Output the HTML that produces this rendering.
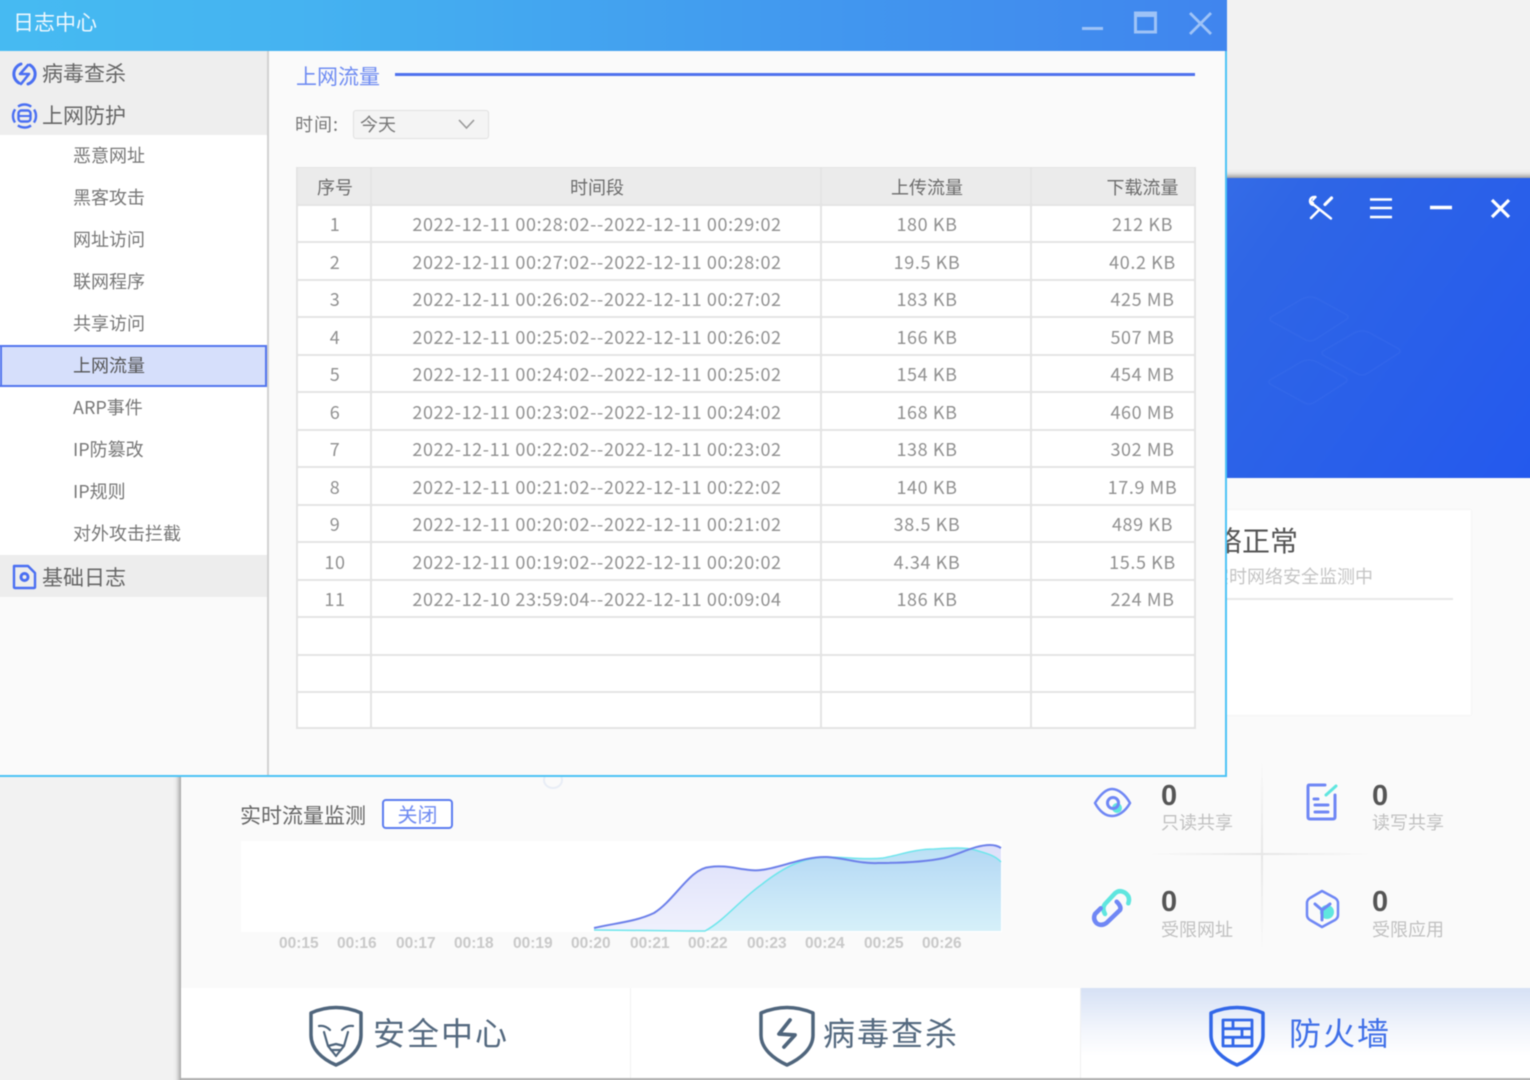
<!DOCTYPE html>
<html lang="zh"><head><meta charset="utf-8"><title>日志中心</title>
<style>
*{box-sizing:border-box;margin:0;padding:0}
html,body{width:1530px;height:1080px;overflow:hidden;background:#f2f2f2}
body{font-family:"Liberation Sans","Noto Sans CJK SC",sans-serif;position:relative}
.a{position:absolute;white-space:nowrap}
#root{position:absolute;left:-10px;top:-10px;width:1550px;height:1100px;filter:blur(.4px);background:#f2f2f2}
#in{position:absolute;left:10px;top:10px;width:1530px;height:1080px}
.sub{left:73px;font-size:18px;line-height:26px;color:#777;font-family:"Noto Sans CJK SC",sans-serif}
.grp{left:42px;font-size:21px;line-height:30px;color:#666;font-family:"Noto Sans CJK SC",sans-serif}
.grid{position:absolute;left:296px;top:167px;width:900px;display:grid;grid-template-columns:74px 450px 210px 164px;grid-template-rows:repeat(14,37.5px) 35.5px;border-left:2px solid #e4e4e4;border-top:1px solid #e4e4e4;font-family:"Noto Sans CJK SC",sans-serif;font-size:18px;color:#909090;background:#fff}
.grid div{border-right:2px solid #e4e4e4;border-bottom:2px solid #e4e4e4;display:flex;align-items:center;justify-content:center;white-space:nowrap;height:100%;letter-spacing:.6px;padding-top:2px;padding-left:2px}
.grid div:nth-child(4n){justify-content:flex-start;padding-left:0}
.grid div:nth-child(4n) span{display:block;width:100%;text-align:center;margin-left:59px}
.grid .h{background:#ebebeb;color:#6c6c6c;letter-spacing:0}
.num{font-size:29px;font-weight:bold;color:#555;line-height:30px;font-family:"Liberation Sans",sans-serif}
.lab{font-size:18px;color:#c0c0c0;line-height:26px;font-family:"Noto Sans CJK SC",sans-serif}
.tl{font-size:32px;letter-spacing:2px;line-height:44px;color:#54697f;font-family:"Noto Sans CJK SC",sans-serif}
.tk{font-size:15.5px;font-weight:bold;color:#c9c9c9;line-height:20px;font-family:"Liberation Sans",sans-serif}
</style></head><body>
<div id="root"><div id="in">

<!-- back window -->
<div class="a" style="left:181px;top:178px;width:1360px;height:910px;background:#fafafa;box-shadow:0 -2px 6px rgba(0,0,0,.35),-2px 0 5px rgba(0,0,0,.22)"></div>
<div class="a" style="left:181px;top:178px;width:1360px;height:300px;background:linear-gradient(125deg,#4a84ec 45%,#2f66e6 72%,#2459ee 100%)"></div>
<svg class="a" style="left:1227px;top:181px" width="303" height="297" fill="none" stroke="#5a86ee" stroke-opacity=".14" stroke-width="1.500">
<path d="M44 136 L75 118 Q83 114 91 118 L120 134 Q122 136 120 138 L89 158 Q83 162 77 158 L44 140 Q42 138 44 136Z"/>
<path d="M96 170 L127 152 Q135 148 143 152 L172 168 Q174 170 172 172 L141 192 Q135 196 129 192 L96 174 Q94 172 96 170Z"/>
<path d="M43 199 L74 181 Q82 177 90 181 L119 197 Q121 199 119 201 L88 221 Q82 225 76 221 L43 203 Q41 201 43 199Z"/>
</svg>

<svg class="a" style="left:1300px;top:190px" width="220" height="38" fill="none" stroke="#fff" stroke-width="3" stroke-linecap="round">
<path d="M15.500 7 Q10 6.500 10 11.500 Q10.500 15 14 15 L31 28.500 M10.500 11 L13 13" stroke-width="2.400"/>
<path d="M15.500 7 L13 10" stroke-width="2"/>
<path d="M31.500 8 L25 14.500" stroke-width="3.200"/>
<path d="M19 20 L11 28" stroke-width="2.600"/>
<path d="M70 9.500H92 M70 18H92 M70 27H92" stroke-width="2.500" stroke-linecap="butt"/>
<path d="M130 17.500H152" stroke-width="3.500" stroke-linecap="butt"/>
<path d="M192 10 L209 27 M209 10 L192 27" stroke-width="3.200" stroke-linecap="butt"/>
</svg>

<!-- status card -->
<div class="a" style="left:1100px;top:510px;width:371px;height:205px;background:#fff;box-shadow:0 0 2px rgba(0,0,0,.08)"></div>
<div class="a" style="left:1214px;top:520px;font-size:28px;line-height:40px;color:#555;font-family:'Noto Sans CJK SC',sans-serif">络正常</div>
<div class="a" style="left:1211px;top:563px;font-size:18px;line-height:26px;color:#c4c4c4;font-family:'Noto Sans CJK SC',sans-serif">实时网络安全监测中</div>
<div class="a" style="left:1100px;top:598px;width:353px;height:1.500px;background:#e8e8e8"></div>

<div class="a" style="left:543px;top:771px;width:20px;height:18px;border-radius:50%;border:2px solid #e8edf6"></div>

<!-- chart -->
<div class="a" style="left:240px;top:800px;font-size:21px;line-height:30px;color:#666;font-family:'Noto Sans CJK SC',sans-serif">实时流量监测</div>
<div class="a" style="left:382px;top:799px;width:71px;height:30px;border:2px solid #5b7cf0;border-radius:4px;background:#fff;color:#6f8bf2;font-size:20px;line-height:26px;text-align:center;font-family:'Noto Sans CJK SC',sans-serif">关闭</div>
<svg class="a" style="left:241px;top:841px" width="761" height="91" viewBox="241 841 761 91">
<defs>
<linearGradient id="g1" x1="0" y1="0" x2="0" y2="1"><stop offset="0" stop-color="#dde0fa"/><stop offset="1" stop-color="#f0f1fd"/></linearGradient>
<linearGradient id="g2" x1="0" y1="0" x2="0" y2="1"><stop offset="0" stop-color="#a5d5f2" stop-opacity=".75"/><stop offset="1" stop-color="#c8f0f8" stop-opacity=".65"/></linearGradient>
</defs>
<rect x="241" y="841" width="761" height="91" fill="#fff"/>
<path d="M594 928 C615 923,635 922,654 913 C675 900,690 868,710 867 C728 864,745 872,761 870 C780 868,805 856,827 857 C845 858,860 864,878 863 C900 863,925 862,944 858 C960 854,975 845,990 845 C995 845,998 846,1001 848 L1001 931 L594 931Z" fill="url(#g1)"/>
<path d="M705 931 C725 920,740 900,761 885 C785 866,805 857,827 857 C845 857,865 860,883 858 C900 855,915 849,934 849 C950 848,965 847,975 850 C985 853,995 855,1001 862 L1001 931Z" fill="url(#g2)"/>
<path d="M594 930 L690 931 L705 931 C725 920,740 900,761 885 C785 866,805 857,827 857 C845 857,865 860,883 858 C900 855,915 849,934 849 C950 848,965 847,975 850 C985 853,995 855,1001 862" fill="none" stroke="#6fe6ec" stroke-width="1.500"/>
<path d="M594 928 C615 923,635 922,654 913 C675 900,690 868,710 867 C728 864,745 872,761 870 C780 868,805 856,827 857 C845 858,860 864,878 863 C900 863,925 862,944 858 C960 854,975 845,990 845 C995 845,998 846,1001 848" fill="none" stroke="#6d80ea" stroke-width="2"/>
</svg>
<span class="a tk" style="left:279px;top:934px">00:15</span>
<span class="a tk" style="left:337px;top:934px">00:16</span>
<span class="a tk" style="left:396px;top:934px">00:17</span>
<span class="a tk" style="left:454px;top:934px">00:18</span>
<span class="a tk" style="left:513px;top:934px">00:19</span>
<span class="a tk" style="left:571px;top:934px">00:20</span>
<span class="a tk" style="left:630px;top:934px">00:21</span>
<span class="a tk" style="left:688px;top:934px">00:22</span>
<span class="a tk" style="left:747px;top:934px">00:23</span>
<span class="a tk" style="left:805px;top:934px">00:24</span>
<span class="a tk" style="left:864px;top:934px">00:25</span>
<span class="a tk" style="left:922px;top:934px">00:26</span>

<!-- stats -->
<div class="a" style="left:1261px;top:760px;width:1.500px;height:190px;background:linear-gradient(#fafafa,#e6e6e6 50%,#fafafa)"></div>
<div class="a" style="left:1150px;top:853px;width:220px;height:1.500px;background:linear-gradient(90deg,#fafafa,#e6e6e6 50%,#fafafa)"></div>
<span class="a num" style="left:1161px;top:781px">0</span><span class="a lab" style="left:1161px;top:809px">只读共享</span>
<span class="a num" style="left:1372px;top:781px">0</span><span class="a lab" style="left:1372px;top:809px">读写共享</span>
<span class="a num" style="left:1161px;top:887px">0</span><span class="a lab" style="left:1161px;top:916px">受限网址</span>
<span class="a num" style="left:1372px;top:887px">0</span><span class="a lab" style="left:1372px;top:916px">受限应用</span>
<svg class="a" style="left:1090px;top:780px" width="380" height="150" fill="none" stroke-linecap="round" stroke-linejoin="round">
<!-- eye -->
<path d="M5 23 C12 12,18 9,22 9 C28 9,35 14,40 23 C35 32,28 36,22 36 C16 36,10 32,5 23Z" stroke="#6f87f5" stroke-width="2.500"/>
<circle cx="27" cy="28" r="5" fill="#5fe6df"/>
<circle cx="23" cy="23" r="5.500" stroke="#6f87f5" stroke-width="3"/>
<!-- doc -->
<path d="M235 5 H219 Q218 5 218 7 V37 Q218 39 220 39 H243 Q245 39 245 37 V15" stroke="#6f87f5" stroke-width="3"/>
<path d="M246 6 L236 15" stroke="#5fe6df" stroke-width="3"/>
<path d="M224 19 H228 M225 25 H238 M225 32 H238" stroke="#6f87f5" stroke-width="3"/>
<!-- link -->
<path d="M38.300 123.300 Q40.700 116.700 35 112.700 Q29.300 109.300 25 113.300 L15 124 Q11.700 128.300 15 134" stroke="#5fe6df" stroke-width="4.500"/>
<path d="M10.700 128.300 L5 134 Q2.700 139.300 6.700 143.300 Q11.700 146.700 16.700 142.700 L30 130 Q31.700 126.700 26.700 121.700" stroke="#6f87f5" stroke-width="4.500"/>
<!-- cube -->
<path d="M232 112 L245 119 Q248 121 248 124 V136 Q248 139 245 141 L232 148 L220 141 Q217 139 217 136 V124 Q217 121 220 119Z" stroke="#6f87f5" stroke-width="2.500" transform="translate(0,-1)"/>
<circle cx="237" cy="132" r="7" fill="#5fe6df"/>
<path d="M225 124 L232 130 L240 124 M232 130 V140" stroke="#6f87f5" stroke-width="3"/>
</svg>

<!-- tabs -->
<div class="a" style="left:181px;top:988px;width:1360px;height:90px;background:#fff"></div>
<div class="a" style="left:630px;top:988px;width:1px;height:90px;background:#f2f2f2"></div>
<div class="a" style="left:1080px;top:988px;width:460px;height:90px;background:linear-gradient(#d6e1f5,#f2f5fc 45%,#fff 75%);border-left:1px solid #f0f0f0"></div>
<div class="a" style="left:181px;top:1078px;width:1360px;height:12px;background:#b5b5b5"></div>
<svg class="a" style="left:305px;top:1002px" width="62" height="68" fill="none" stroke="#4f657c" stroke-width="3.500" stroke-linejoin="round" stroke-linecap="round">
<path d="M6 11 Q18 5.500 31 5.500 Q44 5.500 56 11 V33 C56 47 45 57 31 63 C17 57 6 47 6 33Z" stroke-width="3.500"/>
<path d="M14 24 Q20 23 25 28 M48 24 Q42 23 37 28 M19 30 L23 44 L31 42 L39 44 L43 30 M23 44 L31 54 L39 44 M26 48 H36" stroke-width="2.200"/>
</svg>
<span class="a tl" style="left:373px;top:1010px">安全中心</span>
<svg class="a" style="left:755px;top:1002px" width="62" height="68" fill="none" stroke="#4f657c" stroke-width="3.500" stroke-linejoin="round" stroke-linecap="round">
<path d="M6 11 Q19 5.500 32 5.500 Q45 5.500 58 11 V33 C58 47 45 57 32 63 C19 57 6 47 6 33Z"/>
<path d="M35 18 L24 32 L40 33 L29 45" stroke-width="3.800"/>
</svg>
<span class="a tl" style="left:823px;top:1010px">病毒查杀</span>
<svg class="a" style="left:1205px;top:1002px" width="62" height="68" fill="none" stroke="#3267e8" stroke-width="3.500" stroke-linejoin="round">
<path d="M6 11 Q18 5.500 32 5.500 Q46 5.500 58 11 V33 C58 47 46 57 32 63 C18 57 6 47 6 33Z"/>
<path d="M18 18 H47 V44 H18Z M18 26.700 H47 M18 35.300 H47 M28 18 V26.700 M37 26.700 V35.300 M28 35.300 V44" stroke-width="2.800"/>
</svg>
<span class="a tl" style="left:1289px;top:1010px;color:#3f6fe8">防火墙</span>

<!-- front window -->
<div class="a" style="left:-10px;top:-10px;width:1237px;height:787px;background:#fafafa;border-right:2px solid #4cc3f5;border-bottom:2px solid #4cc3f5"></div>
<div class="a" style="left:-10px;top:-10px;width:1237px;height:61px;background:linear-gradient(90deg,#46bbf2 0%,#45b3f1 25%,#4299ef 65%,#4085ee 100%)"></div>
<div class="a" style="left:13px;top:7px;font-size:21px;line-height:30px;color:#eef8fe;font-family:'Noto Sans CJK SC',sans-serif">日志中心</div>
<svg class="a" style="left:1075px;top:5px" width="145" height="36" fill="none" stroke="#9ec3f7" stroke-width="3.500">
<path d="M7 23.500H28" stroke-width="3"/>
<rect x="60.500" y="8" width="20" height="19" stroke-width="3"/>
<path d="M60 9.500H81" stroke-width="5"/>
<path d="M115 8 L136 29 M136 8 L115 29" stroke-width="2.800"/>
</svg>

<!-- sidebar -->
<div class="a" style="left:-10px;top:51px;width:277px;height:84px;background:#eeeeee"></div>
<div class="a" style="left:-10px;top:135px;width:277px;height:420px;background:#fff"></div>
<div class="a" style="left:-10px;top:555px;width:277px;height:42px;background:#ededed"></div>
<div class="a" style="left:267px;top:51px;width:2px;height:724px;background:#d2d2d2"></div>
<div class="a" style="left:-10px;top:345px;width:277px;height:42px;background:#d6dffb;border:2px solid #5275ee;border-left:none"></div>
<div class="a" style="left:0;top:345px;width:2px;height:42px;background:#5275ee"></div>
<svg class="a" style="left:10px;top:60px" width="30" height="540" fill="none" stroke="#4a6ff2" stroke-linecap="round" stroke-linejoin="round">
<path d="M11 4 A10.500 10.500 0 0 0 9 23 M18 24 A10.500 10.500 0 0 0 20 5" stroke-width="3"/>
<path d="M18 5 L10 14 H19 L11 24" stroke-width="2.600"/>
<circle cx="14.500" cy="56" r="11.500" stroke-width="2.400" stroke-dasharray="14 4" stroke-dashoffset="7" stroke-linecap="butt"/>
<rect x="8.500" y="50.500" width="12" height="11" rx="3" stroke-width="2.400"/><path d="M8.500 56H20.500" stroke-width="2"/>
<path d="M4 506 H18 L25 513 V527 Q25 528 24 528 H5 Q4 528 4 527Z" stroke-width="2.400"/>
<circle cx="14.500" cy="517" r="3.500" stroke-width="3"/>
</svg>
<div class="a grp" style="top:58px">病毒查杀</div>
<div class="a grp" style="top:100px">上网防护</div>
<div class="a grp" style="top:562px">基础日志</div>
<div class="a sub" style="top:142px">恶意网址</div>
<div class="a sub" style="top:184px">黑客攻击</div>
<div class="a sub" style="top:226px">网址访问</div>
<div class="a sub" style="top:268px">联网程序</div>
<div class="a sub" style="top:310px">共享访问</div>
<div class="a sub" style="top:352px;color:#555">上网流量</div>
<div class="a sub" style="top:394px">ARP事件</div>
<div class="a sub" style="top:436px">IP防篡改</div>
<div class="a sub" style="top:478px">IP规则</div>
<div class="a sub" style="top:520px">对外攻击拦截</div>

<!-- content -->
<div class="a" style="left:296px;top:61px;font-size:21px;line-height:30px;color:#6f8cf2;font-family:'Noto Sans CJK SC',sans-serif">上网流量</div>
<div class="a" style="left:395px;top:73px;width:800px;height:3px;background:#4f71ee"></div>
<div class="a" style="left:295px;top:111px;font-size:18px;line-height:26px;color:#777;letter-spacing:1px;font-family:'Noto Sans CJK SC',sans-serif">时间:</div>
<div class="a" style="left:353px;top:110px;width:136px;height:29px;background:#f4f4f4;border:1.500px solid #e0e0e0;border-radius:3px"></div>
<div class="a" style="left:360px;top:111px;font-size:18px;line-height:26px;color:#777;font-family:'Noto Sans CJK SC',sans-serif">今天</div>
<svg class="a" style="left:456px;top:117px" width="22" height="16" fill="none" stroke="#999" stroke-width="1.600"><path d="M3 3 L10.500 11 L18 3"/></svg>

<div class="grid">
<div class="h">序号</div><div class="h">时间段</div><div class="h">上传流量</div><div class="h"><span>下载流量</span></div>
<div>1</div><div>2022-12-11 00:28:02--2022-12-11 00:29:02</div><div>180 KB</div><div><span>212 KB</span></div>
<div>2</div><div>2022-12-11 00:27:02--2022-12-11 00:28:02</div><div>19.5 KB</div><div><span>40.2 KB</span></div>
<div>3</div><div>2022-12-11 00:26:02--2022-12-11 00:27:02</div><div>183 KB</div><div><span>425 MB</span></div>
<div>4</div><div>2022-12-11 00:25:02--2022-12-11 00:26:02</div><div>166 KB</div><div><span>507 MB</span></div>
<div>5</div><div>2022-12-11 00:24:02--2022-12-11 00:25:02</div><div>154 KB</div><div><span>454 MB</span></div>
<div>6</div><div>2022-12-11 00:23:02--2022-12-11 00:24:02</div><div>168 KB</div><div><span>460 MB</span></div>
<div>7</div><div>2022-12-11 00:22:02--2022-12-11 00:23:02</div><div>138 KB</div><div><span>302 MB</span></div>
<div>8</div><div>2022-12-11 00:21:02--2022-12-11 00:22:02</div><div>140 KB</div><div><span>17.9 MB</span></div>
<div>9</div><div>2022-12-11 00:20:02--2022-12-11 00:21:02</div><div>38.5 KB</div><div><span>489 KB</span></div>
<div>10</div><div>2022-12-11 00:19:02--2022-12-11 00:20:02</div><div>4.34 KB</div><div><span>15.5 KB</span></div>
<div>11</div><div>2022-12-10 23:59:04--2022-12-11 00:09:04</div><div>186 KB</div><div><span>224 MB</span></div>
<div></div><div></div><div></div><div></div>
<div></div><div></div><div></div><div></div>
<div></div><div></div><div></div><div></div>
</div>

</div></div>
</body></html>
